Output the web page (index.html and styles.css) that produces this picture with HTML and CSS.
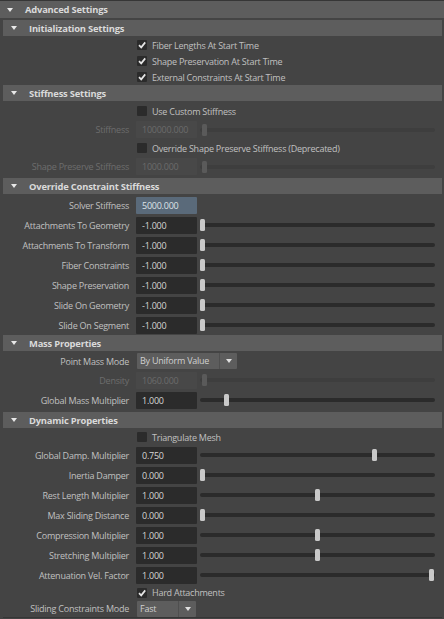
FILE: index.html
```html
<!DOCTYPE html>
<html>
<head>
<meta charset="utf-8">
<link rel="stylesheet" href="styles.css">
</head>
<body>
<div class="panel">
  <div class="hdr outer"><span class="tri"></span><span>Advanced Settings</span></div>
  <div class="body">

    <div class="sec">
      <div class="hdr"><span class="tri"></span><span>Initialization Settings</span></div>
      <div class="content init">
        <div class="row cbrow"><span class="lbl"></span><span class="box"><svg viewBox="0 0 10 10"><polyline points="2,5.2 4.2,7.4 8.2,2.4"/></svg></span><span class="cbtext">Fiber Lengths At Start Time</span></div>
        <div class="row cbrow"><span class="lbl"></span><span class="box"><svg viewBox="0 0 10 10"><polyline points="2,5.2 4.2,7.4 8.2,2.4"/></svg></span><span class="cbtext">Shape Preservation At Start Time</span></div>
        <div class="row cbrow"><span class="lbl"></span><span class="box"><svg viewBox="0 0 10 10"><polyline points="2,5.2 4.2,7.4 8.2,2.4"/></svg></span><span class="cbtext">External Constraints At Start Time</span></div>
      </div>
    </div>

    <div class="sec">
      <div class="hdr"><span class="tri"></span><span>Stiffness Settings</span></div>
      <div class="content stiff">
        <div class="row cbrow"><span class="lbl"></span><span class="box"></span><span class="cbtext">Use Custom Stiffness</span></div>
        <div class="row frow tall dis"><span class="lbl">Stiffness</span><span class="field">100000.000</span><span class="slider"><span class="track"></span><span class="thumb" style="left:2px"></span></span></div>
        <div class="row cbrow"><span class="lbl"></span><span class="box"></span><span class="cbtext">Override Shape Preserve Stiffness (Deprecated)</span></div>
        <div class="row frow tall dis"><span class="lbl">Shape Preserve Stiffness</span><span class="field">1000.000</span><span class="slider"><span class="track"></span><span class="thumb" style="left:2px"></span></span></div>
      </div>
    </div>

    <div class="sec">
      <div class="hdr"><span class="tri"></span><span>Override Constraint Stiffness</span></div>
      <div class="content over">
        <div class="row frow"><span class="lbl">Solver Stiffness</span><span class="field hi">5000.000</span></div>
        <div class="row frow"><span class="lbl">Attachments To Geometry</span><span class="field">-1.000</span><span class="slider"><span class="track"></span><span class="thumb" style="left:0px"></span></span></div>
        <div class="row frow"><span class="lbl">Attachments To Transform</span><span class="field">-1.000</span><span class="slider"><span class="track"></span><span class="thumb" style="left:0px"></span></span></div>
        <div class="row frow"><span class="lbl">Fiber Constraints</span><span class="field">-1.000</span><span class="slider"><span class="track"></span><span class="thumb" style="left:0px"></span></span></div>
        <div class="row frow"><span class="lbl">Shape Preservation</span><span class="field">-1.000</span><span class="slider"><span class="track"></span><span class="thumb" style="left:0px"></span></span></div>
        <div class="row frow"><span class="lbl">Slide On Geometry</span><span class="field">-1.000</span><span class="slider"><span class="track"></span><span class="thumb" style="left:0px"></span></span></div>
        <div class="row frow"><span class="lbl">Slide On Segment</span><span class="field">-1.000</span><span class="slider"><span class="track"></span><span class="thumb" style="left:0px"></span></span></div>
      </div>
    </div>

    <div class="sec">
      <div class="hdr"><span class="tri"></span><span>Mass Properties</span></div>
      <div class="content mass">
        <div class="row drow"><span class="lbl">Point Mass Mode</span><span class="drop wide"><span class="dtext">By Uniform Value</span><span class="darrow"></span></span></div>
        <div class="row frow dis"><span class="lbl">Density</span><span class="field">1060.000</span><span class="slider"><span class="track"></span><span class="thumb" style="left:2px"></span></span></div>
        <div class="row frow"><span class="lbl">Global Mass Multiplier</span><span class="field">1.000</span><span class="slider"><span class="track"></span><span class="thumb" style="left:24px"></span></span></div>
      </div>
    </div>

    <div class="sec last">
      <div class="hdr"><span class="tri"></span><span>Dynamic Properties</span></div>
      <div class="content dyn">
        <div class="row cbrow"><span class="lbl"></span><span class="box"></span><span class="cbtext">Triangulate Mesh</span></div>
        <div class="row frow"><span class="lbl">Global Damp. Multiplier</span><span class="field">0.750</span><span class="slider"><span class="track"></span><span class="thumb" style="left:172px"></span></span></div>
        <div class="row frow"><span class="lbl">Inertia Damper</span><span class="field">0.000</span><span class="slider"><span class="track"></span><span class="thumb" style="left:0px"></span></span></div>
        <div class="row frow"><span class="lbl">Rest Length Multiplier</span><span class="field">1.000</span><span class="slider"><span class="track"></span><span class="thumb" style="left:115px"></span></span></div>
        <div class="row frow"><span class="lbl">Max Sliding Distance</span><span class="field">0.000</span><span class="slider"><span class="track"></span><span class="thumb" style="left:0px"></span></span></div>
        <div class="row frow"><span class="lbl">Compression Multiplier</span><span class="field">1.000</span><span class="slider"><span class="track"></span><span class="thumb" style="left:115px"></span></span></div>
        <div class="row frow"><span class="lbl">Stretching Multiplier</span><span class="field">1.000</span><span class="slider"><span class="track"></span><span class="thumb" style="left:115px"></span></span></div>
        <div class="row frow"><span class="lbl">Attenuation Vel. Factor</span><span class="field">1.000</span><span class="slider"><span class="track"></span><span class="thumb" style="left:229px"></span></span></div>
        <div class="row cbrow short"><span class="lbl"></span><span class="box"><svg viewBox="0 0 10 10"><polyline points="2,5.2 4.2,7.4 8.2,2.4"/></svg></span><span class="cbtext">Hard Attachments</span></div>
        <div class="row drow short"><span class="lbl">Sliding Constraints Mode</span><span class="drop narrow"><span class="dtext">Fast</span><span class="darrow"></span></span></div>
      </div>
    </div>

  </div>
</div>
</body>
</html>
```
FILE: styles.css
```css
* { box-sizing: border-box; }
html, body { margin: 0; padding: 0; }
body {
  background: #444444;
  width: 444px;
  height: 619px;
  overflow: hidden;
  font-family: "Open Sans", "Noto Sans", sans-serif;
  font-size: 9px;
  letter-spacing: -0.24px;
  color: #c0c0c0;
}
.panel { border-top: 1px solid #363636; }
.hdr {
  height: 16px;
  background: #5d5d5d;
  display: flex;
  align-items: center;
  font-weight: bold;
  font-size: 9.4px;
  letter-spacing: -0.2px;
  color: #dadada;
  white-space: nowrap;
}
.hdr.outer { height: 17px; }
.tri {
  width: 0; height: 0;
  border-left: 3px solid transparent;
  border-right: 3px solid transparent;
  border-top: 4px solid #e8e8e8;
  margin-left: 7px;
  margin-right: 12px;
}
.hdr.outer .tri { margin-left: 7px; }
.hdr:not(.outer) .tri { margin-left: 8px; }
.body { padding: 2px 2px 0 3px; }
.content { padding-top: 1px; }
.content.stiff { padding-top: 2px; padding-bottom: 1px; }
.content.mass { padding-bottom: 2px; }
.sec.last { border-bottom: 1px solid #363636; }

.row { display: flex; align-items: center; white-space: nowrap; }
.cbrow { height: 16px; }
.cbrow.short { height: 15px; }
.frow { height: 20px; }
.frow.tall { height: 21px; }
.drow { height: 18px; }
.drow.short { height: 17px; }

.lbl {
  width: 126px;
  flex: none;
  text-align: right;
  color: #c0c0c0;
}
.dis .lbl { color: #6d6d6d; }

.box {
  flex: none;
  width: 10px; height: 10px;
  margin-left: 8px;
  background: #2b2b2b;
  border-radius: 1px;
  display: flex;
}
.box svg { width: 10px; height: 10px; }
.box polyline { fill: none; stroke: #e6e6e6; stroke-width: 1.7; }
.cbtext { margin-left: 5px; color: #c0c0c0; }

.field {
  flex: none;
  width: 61px; height: 17px;
  margin-left: 7px;
  background: #2b2b2b;
  color: #d6d6d6;
  padding-left: 6px;
  line-height: 17px;
  border-radius: 1px;
}
.field.hi { background: #5a6a7a; color: #dde3e8; }
.dis .field { background: #484848; color: #6b6b6b; }

.slider {
  position: relative;
  flex: none;
  width: 235px; height: 12px;
  margin-left: 3px;
}
.track {
  position: absolute;
  left: 0; right: 0; top: 4px;
  height: 4px;
  background: #2b2b2b;
  border-radius: 2px;
}
.dis .track { background: #3e3e3e; }
.thumb {
  position: absolute;
  top: 0;
  width: 5px; height: 12px;
  background: #c9c9c9;
  border-radius: 1.5px;
}
.dis .thumb { background: #5a5a5a; }

.drop {
  flex: none;
  display: flex;
  height: 16px;
  margin-left: 8px;
  background: #5d5d5d;
  color: #d0d0d0;
  border-radius: 1px;
}
.drop.wide { width: 100px; }
.drop.narrow { width: 59px; height: 16px; }
.dtext { flex: 1; padding-left: 3px; line-height: 16px; border-right: 1px solid #4f4f4f; }
.darrow {
  width: 17px;
  display: flex; align-items: center; justify-content: center;
}
.darrow::after {
  content: "";
  width: 0; height: 0;
  border-left: 3.5px solid transparent;
  border-right: 3.5px solid transparent;
  border-top: 4px solid #e0e0e0;
}
```
